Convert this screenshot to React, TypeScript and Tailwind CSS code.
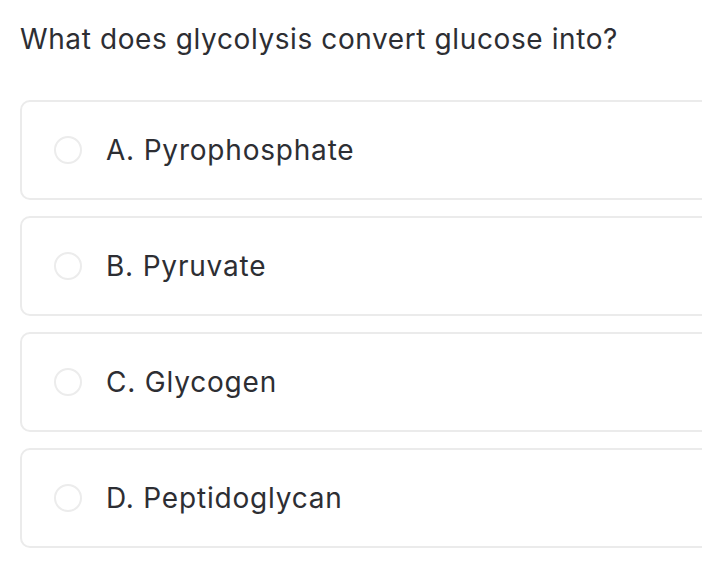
const options = ["A. Pyrophosphate", "B. Pyruvate", "C. Glycogen", "D. Peptidoglycan"];

export default function App() {
  return (
    <div className="min-h-[584px] w-[702px] overflow-hidden bg-white pl-5 pt-[19px] font-['Inter',sans-serif] text-[#2d2e33]">
      <h1 className="text-[28px] leading-[40px] font-normal tracking-[0.6px]">
        What does glycolysis convert glucose into?
      </h1>
      <div className="mt-[41px] flex w-[700px] flex-col gap-[16px]">
        {options.map((label) => (
          <label
            key={label}
            className="flex h-[100px] items-center rounded-[10px] border-2 border-[#ebebeb] pl-[32px]"
          >
            <span className="h-[28px] w-[28px] shrink-0 rounded-full border-2 border-[#ececec]" />
            <span className="ml-[24px] text-[28px] leading-none tracking-[0.8px]">{label}</span>
          </label>
        ))}
      </div>
    </div>
  );
}
